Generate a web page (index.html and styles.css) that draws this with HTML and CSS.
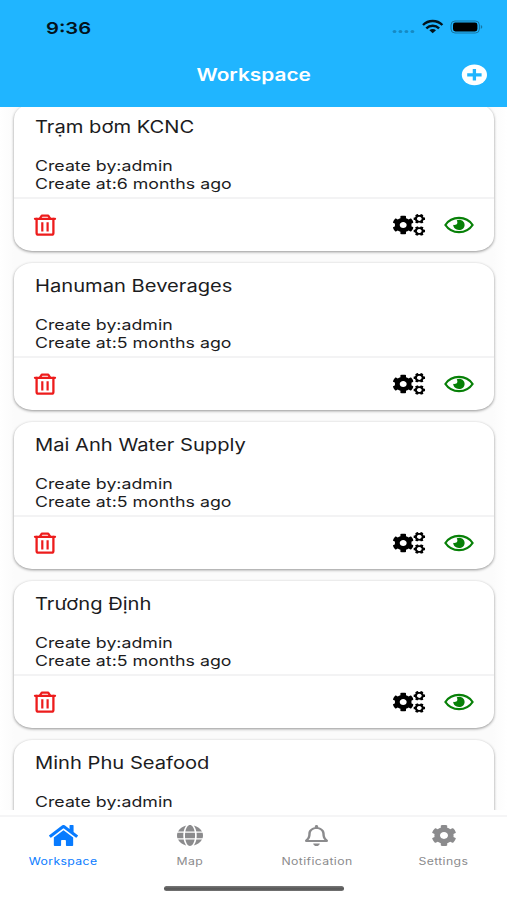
FILE: index.html
```html
<!DOCTYPE html>
<html lang="en">
<head>
<meta charset="utf-8">
<title>Workspace</title>
<link rel="stylesheet" href="styles.css">
</head>
<body>
<svg class="sprite" aria-hidden="true">
  <symbol id="cog" viewBox="16 8 480 496" preserveAspectRatio="none"><path d="M487.4 315.7l-42.6-24.6c4.3-23.2 4.3-47 0-70.2l42.6-24.6c4.9-2.8 7.1-8.6 5.5-14-11.1-35.6-30-67.8-54.7-94.6-3.8-4.1-10-5.1-14.8-2.3L380.8 110c-17.9-15.4-38.5-27.3-60.8-35.1V25.8c0-5.6-3.9-10.5-9.4-11.7-36.7-8.2-74.3-7.8-109.2 0-5.5 1.2-9.4 6.1-9.4 11.7V75c-22.2 7.9-42.8 19.8-60.8 35.1L88.7 85.5c-4.9-2.8-11-1.9-14.8 2.3-24.7 26.7-43.6 58.9-54.7 94.6-1.7 5.4.6 11.2 5.5 14L67.3 221c-4.3 23.2-4.3 47 0 70.2l-42.6 24.6c-4.9 2.8-7.1 8.6-5.5 14 11.1 35.6 30 67.8 54.7 94.6 3.8 4.1 10 5.1 14.8 2.3l42.6-24.6c17.9 15.4 38.5 27.3 60.8 35.1v49.2c0 5.6 3.9 10.5 9.4 11.7 36.7 8.2 74.3 7.8 109.2 0 5.5-1.2 9.4-6.1 9.4-11.7v-49.2c22.2-7.9 42.8-19.8 60.8-35.1l42.6 24.6c4.9 2.8 11 1.9 14.8-2.3 24.7-26.7 43.6-58.9 54.7-94.6 1.5-5.5-.7-11.3-5.6-14.1zM256 336c-44.1 0-80-35.9-80-80s35.9-80 80-80 80 35.9 80 80-35.9 80-80 80z"/></symbol>
  <symbol id="small-cog" viewBox="8 16 496 480" preserveAspectRatio="none"><path transform="rotate(30 256 256)" fill-rule="evenodd" d="M487.4 315.7l-42.6-24.6c4.3-23.2 4.3-47 0-70.2l42.6-24.6c4.9-2.8 7.1-8.6 5.5-14-11.1-35.6-30-67.8-54.7-94.6-3.8-4.1-10-5.1-14.8-2.3L380.8 110c-17.9-15.4-38.5-27.3-60.8-35.1V25.8c0-5.6-3.9-10.5-9.4-11.7-36.7-8.2-74.3-7.8-109.2 0-5.5 1.2-9.4 6.1-9.4 11.7V75c-22.2 7.9-42.8 19.8-60.8 35.1L88.7 85.5c-4.9-2.8-11-1.9-14.8 2.3-24.7 26.7-43.6 58.9-54.7 94.6-1.7 5.4.6 11.2 5.5 14L67.3 221c-4.3 23.2-4.3 47 0 70.2l-42.6 24.6c-4.9 2.8-7.1 8.6-5.5 14 11.1 35.6 30 67.8 54.7 94.6 3.8 4.1 10 5.1 14.8 2.3l42.6-24.6c17.9 15.4 38.5 27.3 60.8 35.1v49.2c0 5.6 3.9 10.5 9.4 11.7 36.7 8.2 74.3 7.8 109.2 0 5.5-1.2 9.4-6.1 9.4-11.7v-49.2c22.2-7.9 42.8-19.8 60.8-35.1l42.6 24.6c4.9 2.8 11 1.9 14.8-2.3 24.7-26.7 43.6-58.9 54.7-94.6 1.5-5.5-.7-11.3-5.6-14.1zM256 356a100 100 0 1 1 0-200 100 100 0 0 1 0 200z"/></symbol>
  <symbol id="cogs" viewBox="0 0 34 24">
    <use href="#cog" x="0.8" y="2.6" width="20.8" height="18.8"/>
    <use href="#small-cog" x="21.4" y="1" width="11.8" height="9.6"/>
    <use href="#small-cog" x="21.4" y="13.2" width="11.8" height="9.6"/>
  </symbol>
  <symbol id="trash" viewBox="0 0 24 24">
    <g fill="none" stroke="currentColor" stroke-width="2.3" stroke-linejoin="round" stroke-linecap="round">
      <path d="M2 5.8H22"/><path d="M7 5.4L8.8 2.7H15.2L17 5.4"/>
      <path d="M3.6 6V20Q3.6 21.7 5.4 21.7H18.6Q20.4 21.7 20.4 20V6"/>
      <path stroke-width="2.2" stroke-linecap="butt" d="M9.3 9.3V18.5M14.6 9.3V18.5"/>
    </g>
  </symbol>
  <symbol id="eye" viewBox="0 0 30 18">
    <path fill="none" stroke="currentColor" stroke-width="2.2" d="M1.4 9C4.4 4.4 9.2 1.9 15 1.9S25.6 4.4 28.6 9C25.6 13.6 20.8 16.1 15 16.1S4.4 13.6 1.4 9Z"/>
    <path fill="currentColor" d="M15 3.8C18.2 3.8 20.6 6 20.6 8.9S18.2 14 15 14 9.2 11.8 9.2 8.8C10.2 9.4 13.4 9 13.4 6.6 13.4 5.4 12.9 4.8 12.8 4.2Z"/>
  </symbol>
  <symbol id="home" viewBox="0 32 576 448" preserveAspectRatio="none"><path d="M280.37 148.26L96 300.11V464a16 16 0 0 0 16 16l112.06-.29a16 16 0 0 0 15.92-16V368a16 16 0 0 1 16-16h64a16 16 0 0 1 16 16v95.64a16 16 0 0 0 16 16.05L464 480a16 16 0 0 0 16-16V300L295.67 148.26a12.19 12.19 0 0 0-15.3 0zM571.6 251.47L488 182.56V44.05a12 12 0 0 0-12-12h-56a12 12 0 0 0-12 12v72.61L318.47 43a48 48 0 0 0-61 0L4.34 251.47a12 12 0 0 0-1.6 16.9l25.5 31A12 12 0 0 0 45.15 301l235.22-193.74a12.19 12.19 0 0 1 15.3 0L530.9 301a12 12 0 0 0 16.9-1.6l25.5-31a12 12 0 0 0-1.7-16.93z"/></symbol>
  <symbol id="globe" viewBox="0 8 496 496" preserveAspectRatio="none"><path d="M336.5 160C322 70.7 287.8 8 248 8s-74 62.7-88.5 152h177zM152 256c0 22.2 1.2 43.5 3.3 64h185.3c2.1-20.5 3.3-41.8 3.3-64s-1.2-43.5-3.3-64H155.3c-2.1 20.5-3.3 41.8-3.3 64zm324.7-96c-28.6-67.9-86.5-120.4-158-141.6 24.4 33.8 41.2 84.7 50 141.6h108zM177.2 18.4C105.8 39.6 47.8 92.1 19.3 160h108c8.7-56.9 25.5-107.8 49.9-141.6zM487.4 192H372.7c2.1 21 3.3 42.5 3.3 64s-1.2 43-3.3 64h114.6c5.5-20.5 8.6-41.8 8.6-64s-3.1-43.5-8.5-64zM120 256c0-21.5 1.2-43 3.3-64H8.6C3.2 212.5 0 233.8 0 256s3.2 43.5 8.6 64h114.6c-2-21-3.2-42.5-3.2-64zm39.5 96c14.5 89.3 48.7 152 88.5 152s74-62.7 88.5-152h-177zm159.3 141.6c71.4-21.2 129.4-73.7 158-141.6h-108c-8.8 56.9-25.6 107.8-50 141.6zM19.3 352c28.6 67.9 86.5 120.4 158 141.6-24.4-33.8-41.2-84.7-50-141.6h-108z"/></symbol>
  <symbol id="bell" viewBox="0 0 448 512" preserveAspectRatio="none"><path d="M439.39 362.29c-19.32-20.76-55.47-51.99-55.47-154.29 0-77.7-54.48-139.9-127.94-155.16V32c0-17.67-14.32-32-31.98-32s-31.98 14.33-31.98 32v20.84C118.56 68.1 64.08 130.3 64.08 208c0 102.3-36.15 133.53-55.47 154.29-6 6.45-8.66 14.16-8.61 21.71.11 16.4 12.98 32 32.1 32h383.8c19.12 0 32-15.6 32.1-32 .05-7.55-2.61-15.27-8.61-21.71zM67.53 368c21.22-27.97 44.42-74.33 44.53-159.42 0-.2-.06-.38-.06-.58 0-61.86 50.14-112 112-112s112 50.14 112 112c0 .2-.06.38-.06.58.11 85.1 23.31 131.46 44.53 159.42H67.53zM224 512c35.32 0 63.97-28.65 63.97-64H160.03c0 35.35 28.65 64 63.97 64z"/></symbol>
</svg>
<div class="phone">
  <header class="header">
    <div class="status">
      <span class="clock wide">9:36</span>
      <svg class="signals" viewBox="0 0 92 18">
        <g fill="#168ac4"><ellipse cx="3.5" cy="13.5" rx="1.9" ry="1.6"/><ellipse cx="9.4" cy="13.5" rx="1.9" ry="1.6"/><ellipse cx="15.4" cy="13.5" rx="1.9" ry="1.6"/><ellipse cx="21.4" cy="13.5" rx="1.9" ry="1.6"/></g>
        <g fill="none" stroke="#03131c" stroke-width="2.4"><path d="M32 7C37.4 1.7 46 1.7 51.4 7"/><path d="M35.3 10.3C38.9 6.9 44.5 6.9 48.1 10.3"/></g>
        <path fill="#03131c" d="M38.4 12.3C40.2 10.7 43.2 10.7 45 12.3L41.7 15.2Z"/>
        <rect x="60" y="3" width="28.4" height="12" rx="4" fill="none" stroke="#1675a3"/>
        <rect x="62" y="4.6" width="24.4" height="8.8" rx="2.4" fill="#000"/>
        <path fill="#1675a3" d="M89.8 7.1C91.8 7.9 91.8 10.1 89.8 10.9Z"/>
      </svg>
    </div>
    <div class="title-row">
      <h1 class="wide center">Workspace</h1>
      <svg class="add" viewBox="0 0 26 22"><ellipse cx="13.4" cy="10.8" rx="12.6" ry="10.4" fill="#fff"/><path d="M13.4 5V16.6M6.2 10.8H20.6" fill="none" stroke="#20b5ff" stroke-width="3.3"/></svg>
    </div>
  </header>
  <main class="list">
    <article class="card">
      <div class="info"><h2 class="wide">Trạm bơm KCNC</h2><p class="wide">Create by:admin</p><p class="wide at">Create at:6 months ago</p></div>
      <div class="actions"><svg class="trash"><use href="#trash"/></svg><svg class="cogs"><use href="#cogs"/></svg><svg class="eye"><use href="#eye"/></svg></div>
    </article>
    <article class="card">
      <div class="info"><h2 class="wide">Hanuman Beverages</h2><p class="wide">Create by:admin</p><p class="wide at">Create at:5 months ago</p></div>
      <div class="actions"><svg class="trash"><use href="#trash"/></svg><svg class="cogs"><use href="#cogs"/></svg><svg class="eye"><use href="#eye"/></svg></div>
    </article>
    <article class="card">
      <div class="info"><h2 class="wide">Mai Anh Water Supply</h2><p class="wide">Create by:admin</p><p class="wide at">Create at:5 months ago</p></div>
      <div class="actions"><svg class="trash"><use href="#trash"/></svg><svg class="cogs"><use href="#cogs"/></svg><svg class="eye"><use href="#eye"/></svg></div>
    </article>
    <article class="card">
      <div class="info"><h2 class="wide">Trương Định</h2><p class="wide">Create by:admin</p><p class="wide at">Create at:5 months ago</p></div>
      <div class="actions"><svg class="trash"><use href="#trash"/></svg><svg class="cogs"><use href="#cogs"/></svg><svg class="eye"><use href="#eye"/></svg></div>
    </article>
    <article class="card">
      <div class="info"><h2 class="wide">Minh Phu Seafood</h2><p class="wide">Create by:admin</p></div>
    </article>
  </main>
  <footer class="footer">
    <nav class="tabs">
      <div class="tab active"><svg class="home"><use href="#home"/></svg><span class="wide center">Workspace</span></div>
      <div class="tab"><svg class="globe"><use href="#globe"/></svg><span class="wide center">Map</span></div>
      <div class="tab"><svg class="bell"><use href="#bell"/></svg><span class="wide center">Notification</span></div>
      <div class="tab"><svg class="gear"><use href="#cog"/></svg><span class="wide center">Settings</span></div>
    </nav>
    <div class="indicator"></div>
  </footer>
</div>
</body>
</html>
```
FILE: styles.css
```css
* { box-sizing: border-box; }
body { margin: 0; background: #fff; font-family: Inter, "Liberation Sans", sans-serif; color: #1c1c1e; }
h1, h2, p { margin: 0; font-weight: 400; }
svg { display: block; fill: currentColor; flex: none; }
.sprite { position: absolute; width: 0; height: 0; }
.phone { width: 507px; height: 900px; display: flex; flex-direction: column; overflow: hidden; }

/* Glyphs are drawn wider than their natural set width */
.wide { display: block; width: max-content; white-space: nowrap; transform: scaleX(1.225); transform-origin: left center; }
.wide.center { transform-origin: center; }

.header { height: 107px; background: #20b5ff; flex: none; }
.status { height: 54px; padding: 0 24px 0 46px; display: flex; align-items: center; justify-content: space-between; }
.clock { font-size: 16.5px; font-weight: 600; color: #03131c; padding-top: 2px; }
.signals { width: 92px; height: 18px; }
.title-row { height: 42px; display: grid; grid-template-columns: 1fr auto 1fr; align-items: center; padding-right: 20px; padding-left: 20px; }
h1 { grid-column: 2; color: #fff; font-size: 17px; font-weight: 600; }
.add { width: 26px; height: 22px; justify-self: end; }

.list { height: 703px; flex: none; overflow: hidden; padding: 0 13px 0 14px; background: linear-gradient(90deg, #fff, #fbfbfb 14px, #fbfbfb 493px, #fff); }
.card { height: 147px; margin-bottom: 12px; background: #fff; border-radius: 18px / 15px; box-shadow: 0 1px 3px rgba(0,0,0,.42); }
.card:first-child { margin-top: -3px; }
.info { height: 95px; padding: 13px 0 0 21px; border-bottom: 2px solid #f3f3f4; }
h2 { font-size: 17px; line-height: 21px; margin-bottom: 19px; transform: scaleX(1.185); }
h2.wide { transform: scaleX(1.185); }
p { font-size: 14.5px; line-height: 18px; }
.actions { height: 52px; display: flex; align-items: center; padding: 0 20px 0 19px; }
.trash { width: 24px; height: 24px; color: #ed1c1c; margin-right: auto; }
.cogs { width: 34px; height: 24px; color: #000; margin-right: 18px; }
.eye { width: 30px; height: 18px; color: #078007; }

.footer { height: 85px; margin-top: 5px; border-top: 2px solid #f5f5f6; background: #fff; flex: none; }
.tabs { height: 69px; display: grid; grid-template-columns: repeat(4, 1fr); color: #8b8b8d; }
.tab { display: flex; flex-direction: column; align-items: center; padding-top: 8px; font-size: 10px; line-height: 12px; letter-spacing: .3px; }
.tab svg { height: 21px; margin-bottom: 9px; }
.tab.active { color: #087bff; }
.home { width: 29px; }
.globe { width: 26px; }
.bell { width: 23px; }
.gear { width: 24px; }
.indicator { width: 180px; height: 5px; margin: 0 auto; border-radius: 3px; background: linear-gradient(#777, #555 60%, #777); }
```
